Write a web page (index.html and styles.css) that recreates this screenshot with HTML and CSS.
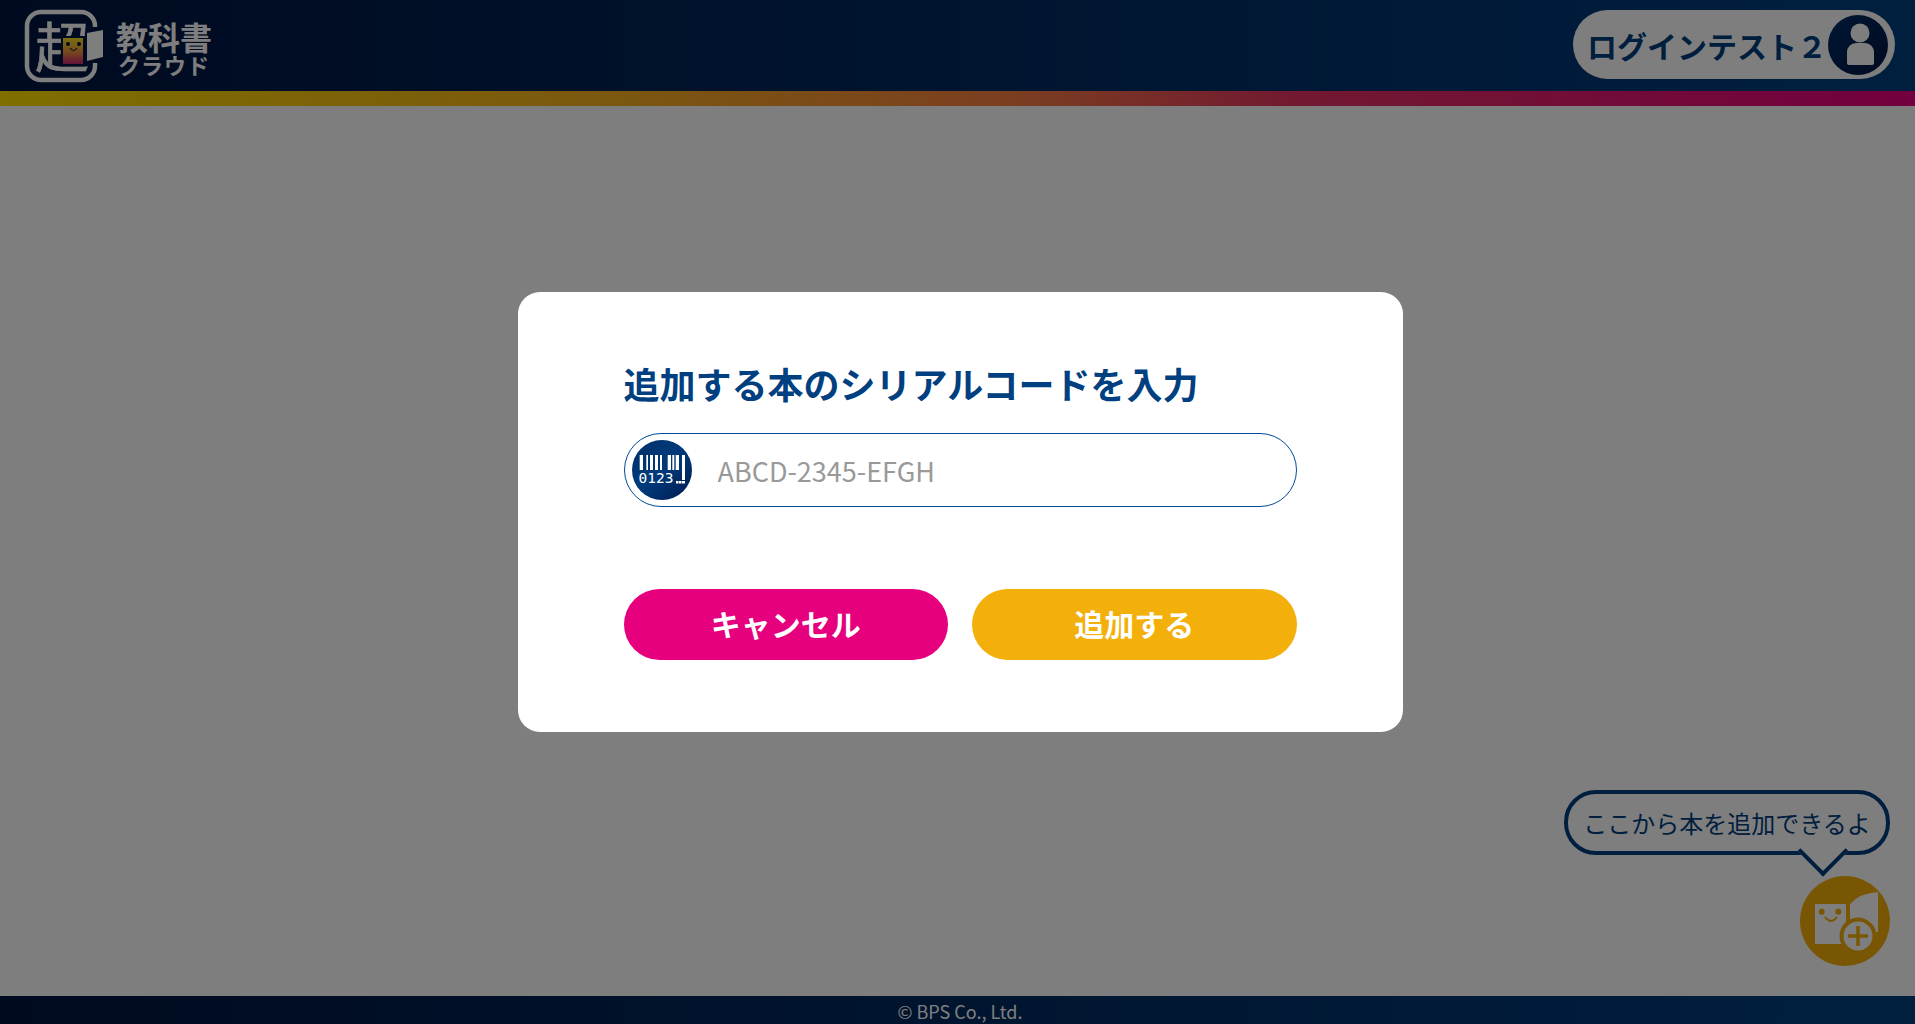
FILE: index.html
```html
<!DOCTYPE html>
<html lang="ja">
<head>
  <meta charset="UTF-8">
  <meta name="viewport" content="width=device-width, initial-scale=1.0">
  <title>超教科書クラウド</title>
  <link rel="stylesheet" href="styles.css">
</head>
<body>
  <header class="top-bar">
    <div class="logo">
      <svg class="logo-mark" viewBox="0 0 80 74" width="80" height="74">
        <defs>
          <linearGradient id="bookGrad" x1="0" y1="0" x2="0" y2="1">
            <stop offset="0" stop-color="#f5e61e"/>
            <stop offset="0.5" stop-color="#f29a3c"/>
            <stop offset="1" stop-color="#c81e78"/>
          </linearGradient>
        </defs>
        <path d="M71 18V17A14 14 0 0 0 57 3H17A14 14 0 0 0 3 17V57A14 14 0 0 0 17 71H57A14 14 0 0 0 71 57V54" fill="none" stroke="#fff" stroke-width="4.500"/>
        <text x="11" y="59" class="logo-kanji">超</text>
        <path d="M63 24L79 21V48L63 52Z" fill="#fff"/>
        <rect x="38" y="28" width="22" height="28" fill="url(#bookGrad)" stroke="#001840" stroke-width="2"/>
        <circle cx="44" cy="35" r="2" fill="#001840"/>
        <circle cx="55" cy="35" r="2" fill="#001840"/>
        <path d="M46 39Q49.500 44 53 39" fill="none" stroke="#001840" stroke-width="1.200"/>
      </svg>
      <div class="logo-text">
        <span class="logo-main">教科書</span>
        <span class="logo-sub">クラウド</span>
      </div>
    </div>
    <div class="user-pill">
      <span class="user-name">ログインテスト２</span>
      <span class="user-icon">
        <svg viewBox="0 0 60 60" width="60" height="60">
          <circle cx="32" cy="18" r="9.500" fill="#fff"/>
          <path d="M19 37A9 9 0 0 1 28 28H37A9 9 0 0 1 46 37V48A2 2 0 0 1 44 50H21A2 2 0 0 1 19 48Z" fill="#fff"/>
        </svg>
      </span>
    </div>
  </header>
  <div class="color-bar"></div>

  <main class="content"></main>

  <footer class="page-footer">© BPS Co., Ltd.</footer>

  <div class="add-hint">ここから本を追加できるよ</div>
  <button class="add-book" type="button" aria-label="本を追加">
    <svg viewBox="0 0 90 90" width="90" height="90">
      <rect x="15" y="28" width="31" height="40" fill="#fff"/>
      <circle cx="21.700" cy="35.700" r="3" fill="#f3af0a"/>
      <circle cx="38.300" cy="35.700" r="3" fill="#f3af0a"/>
      <path d="M25 41Q31 49 37 41" fill="none" stroke="#f3af0a" stroke-width="2"/>
      <path d="M50 28Q60 17 78 16V56L50 60Z" fill="#fff"/>
      <circle cx="58" cy="60" r="18.500" fill="#f3af0a"/>
      <circle cx="58" cy="60" r="14.500" fill="#fff"/>
      <path d="M48 60H68M58 50V70" stroke="#f3af0a" stroke-width="3.500"/>
    </svg>
  </button>

  <div class="overlay">
    <section class="dialog">
      <h2 class="dialog-title">追加する本のシリアルコードを入力</h2>
      <div class="serial-field">
        <span class="serial-icon">
          <svg viewBox="0 0 60 60" width="60" height="60">
            <g fill="#fff">
              <rect x="7.700" y="15" width="3.300" height="15"/>
              <rect x="14.300" y="15" width="1.700" height="15"/>
              <rect x="18" y="15" width="3" height="15"/>
              <rect x="23" y="15" width="3" height="15"/>
              <rect x="28" y="15" width="2" height="15"/>
              <rect x="35.700" y="15" width="3.300" height="15"/>
              <rect x="40.300" y="15" width="2" height="15"/>
              <rect x="43.700" y="15" width="3.300" height="15"/>
              <rect x="50" y="15" width="3" height="25"/>
              <rect x="50" y="41" width="3" height="2.500"/>
              <rect x="44" y="41" width="2.500" height="2.500"/>
              <rect x="47" y="41" width="2.500" height="2.500"/>
            </g>
            <text x="6.500" y="43" class="serial-digits">0123</text>
          </svg>
        </span>
        <input class="serial-input" type="text" placeholder="ABCD-2345-EFGH">
      </div>
      <div class="dialog-actions">
        <button class="btn btn-cancel" type="button">キャンセル</button>
        <button class="btn btn-add" type="button">追加する</button>
      </div>
    </section>
  </div>
</body>
</html>
```

FILE: styles.css
```css
:root {
  --navy: #004080;
  --pink: #e6007e;
  --amber: #f3af0a;
  --top-gradient: linear-gradient(to right, #001540, #004080);
}

* {
  margin: 0;
  padding: 0;
  box-sizing: border-box;
}

html, body {
  height: 100%;
  overflow: hidden;
}

body {
  font-family: "Noto Sans CJK JP", "Noto Sans", sans-serif;
  background: #fff;
  color: var(--navy);
  display: flex;
  flex-direction: column;
}

.top-bar {
  height: 91px;
  background: var(--top-gradient);
  display: flex;
  align-items: center;
  justify-content: space-between;
  padding: 0 20px 2px 24px;
}

.logo {
  display: flex;
  align-items: center;
  gap: 12px;
}

.logo-mark {
  margin-top: 3px;
  overflow: visible;
}

.logo-kanji {
  font-size: 54px;
  fill: #fff;
  stroke: #fff;
  stroke-width: 0.6px;
}

.logo-text {
  display: flex;
  flex-direction: column;
  color: #fff;
  font-weight: 700;
  margin-top: 4px;
}

.logo-main {
  font-size: 32px;
  line-height: 34px;
}

.logo-sub {
  font-size: 22px;
  line-height: 22px;
  letter-spacing: 1px;
  margin-left: 2px;
}

.user-pill {
  width: 322px;
  height: 69px;
  border-radius: 35px;
  background: #fff;
  display: flex;
  align-items: center;
  justify-content: space-between;
  padding: 0 7px 0 14px;
}

.user-name {
  font-size: 30px;
  font-weight: 700;
  color: var(--navy);
  white-space: nowrap;
}

.user-icon {
  width: 60px;
  height: 60px;
  border-radius: 50%;
  background: linear-gradient(135deg, #00306a, #001540);
  overflow: hidden;
}

.color-bar {
  height: 15px;
  background: linear-gradient(to right, #ffe000 0%, #f8b41e 31%, #f88240 52%, #e63264 68%, #e6007e 100%);
}

.content {
  flex: 1;
}

.page-footer {
  height: 28px;
  background: var(--top-gradient);
  color: #fff;
  font-size: 18px;
  line-height: 30px;
  text-align: center;
  padding-left: 5px;
  white-space: nowrap;
}

.add-hint {
  position: absolute;
  left: 1564px;
  top: 790px;
  width: 326px;
  height: 65px;
  border: 4px solid var(--navy);
  border-radius: 32px;
  background: #fff;
  font-size: 24px;
  line-height: 57px;
  text-align: center;
  color: var(--navy);
}

.add-hint::after {
  content: "";
  position: absolute;
  left: 237px;
  top: 39px;
  width: 32px;
  height: 32px;
  background: #fff;
  border-right: 4px solid var(--navy);
  border-bottom: 4px solid var(--navy);
  transform: rotate(45deg);
}

.add-book {
  position: absolute;
  left: 1800px;
  top: 876px;
  width: 90px;
  height: 90px;
  border: none;
  border-radius: 50%;
  background: var(--amber);
}

.overlay {
  position: fixed;
  inset: 0;
  background: rgba(0, 0, 0, 0.505);
  display: flex;
  align-items: center;
  justify-content: center;
  padding-left: 5px;
}

.dialog {
  width: 885px;
  height: 440px;
  background: #fff;
  border-radius: 22px;
  padding: 66px 106px 0;
}

.dialog-title {
  font-size: 36px;
  font-weight: 700;
  line-height: 50px;
  color: var(--navy);
  margin-bottom: 25px;
}

.serial-field {
  height: 74px;
  border: 1px solid #004c99;
  border-radius: 37px;
  display: flex;
  align-items: center;
  padding-left: 7px;
  gap: 26px;
}

.serial-icon {
  width: 60px;
  height: 60px;
  flex: none;
  border-radius: 50%;
  background: linear-gradient(135deg, #00306a, #003a7a 50%, #001a50);
}

.serial-digits {
  font-family: "DejaVu Sans Mono", monospace;
  font-size: 14.500px;
  fill: #fff;
}

.serial-input {
  flex: 1;
  border: none;
  outline: none;
  background: transparent;
  font-family: inherit;
  font-size: 27px;
  color: #333;
  margin-right: 30px;
}

.serial-input::placeholder {
  color: #999;
  opacity: 1;
}

.dialog-actions {
  display: flex;
  gap: 24px;
  margin-top: 82px;
}

.btn {
  flex: 1;
  height: 71px;
  border: none;
  border-radius: 36px;
  padding-bottom: 3px;
  color: #fff;
  font-family: inherit;
  font-size: 30px;
  font-weight: 700;
}

.btn-cancel {
  background: var(--pink);
}

.btn-add {
  background: var(--amber);
}
```
